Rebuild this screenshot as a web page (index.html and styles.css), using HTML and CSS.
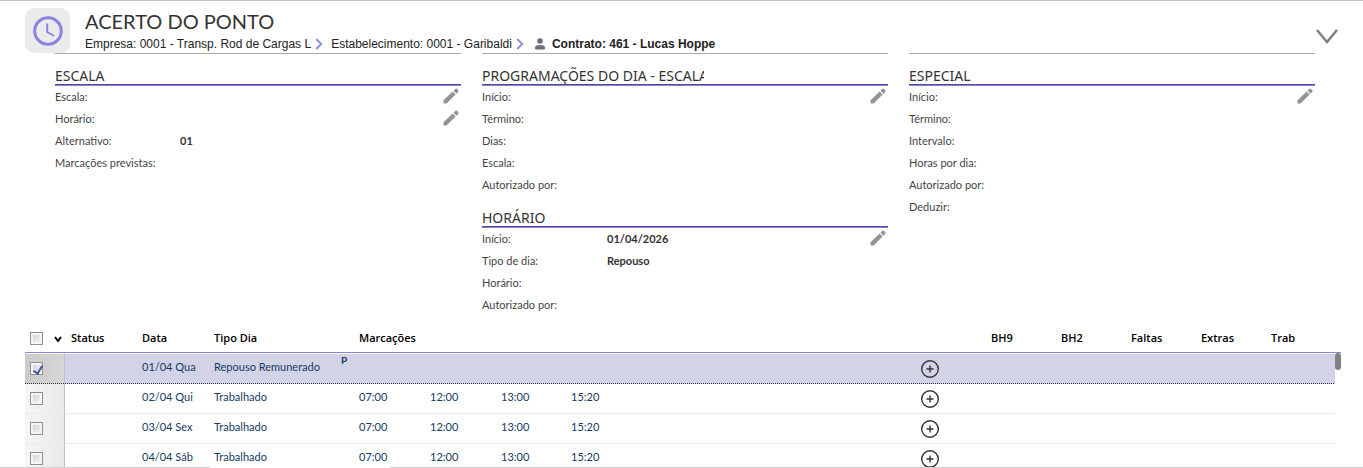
FILE: index.html
```html
<!DOCTYPE html>
<html lang="pt-BR">
<head>
<meta charset="UTF-8">
<title>Acerto do Ponto</title>
<link rel="stylesheet" href="styles.css">
</head>
<body>
<svg class="defs" aria-hidden="true">
  <symbol id="pencil" viewBox="0 0 16 16">
    <path d="M0.5 12.2L9.6 3.6l3 3L3.6 15.500H0.500z"/>
    <path d="M10.500 2.700l1.700-1.700q1-.8 1.900 0l1.200 1.200q.7 1-.1 1.900L13.500 5.700z"/>
  </symbol>
  <symbol id="plus" viewBox="0 0 18 18">
    <circle cx="9" cy="9" r="8.300"/>
    <path d="M9 5.500v7M5.500 9h7"/>
  </symbol>
  <symbol id="next" viewBox="0 0 8 12">
    <path d="M1.200 1l5 5-5 5"/>
  </symbol>
</svg>

<header class="top">
  <div class="logo">
    <svg width="30" height="30" viewBox="0 0 30 30"><circle cx="15" cy="15" r="13.300"/><path d="M14.200 7.500v8.500l7 4"/></svg>
  </div>
  <div class="heading">
    <h1>ACERTO DO PONTO</h1>
    <nav class="crumbs">
      <span>Empresa: 0001 - Transp. Rod de Cargas L</span>
      <svg class="next" width="8" height="12"><use href="#next"/></svg>
      <span>Estabelecimento: 0001 - Garibaldi</span>
      <svg class="next" width="8" height="12"><use href="#next"/></svg>
      <svg class="person" width="10" height="12" viewBox="0 0 10 12"><circle cx="5" cy="3" r="2.800"/><path d="M0 10.500V9.500Q0 7 5 7t5 2.500v1q0 1-1 1H1q-1 0-1-1z"/></svg>
      <strong>Contrato: 461 - Lucas Hoppe</strong>
    </nav>
  </div>
  <button type="button" class="collapse" aria-label="Recolher">
    <svg width="22" height="15" viewBox="0 0 22 15"><path d="M1 1l10 12L21 1"/></svg>
  </button>
</header>

<main class="details">
  <div class="column">
    <section>
      <h2>ESCALA</h2>
      <dl>
        <div><dt>Escala:</dt><dd></dd><button type="button" class="edit" aria-label="Editar escala"><svg width="16" height="16"><use href="#pencil"/></svg></button></div>
        <div><dt>Horário:</dt><dd></dd><button type="button" class="edit" aria-label="Editar horário"><svg width="16" height="16"><use href="#pencil"/></svg></button></div>
        <div><dt>Alternativo:</dt><dd>01</dd></div>
        <div><dt>Marcações previstas:</dt><dd></dd></div>
      </dl>
    </section>
  </div>
  <div class="column">
    <section>
      <h2><span>PROGRAMAÇÕES DO DIA - ESCALA</span></h2>
      <dl>
        <div><dt>Início:</dt><dd></dd><button type="button" class="edit" aria-label="Editar programações"><svg width="16" height="16"><use href="#pencil"/></svg></button></div>
        <div><dt>Término:</dt><dd></dd></div>
        <div><dt>Dias:</dt><dd></dd></div>
        <div><dt>Escala:</dt><dd></dd></div>
        <div><dt>Autorizado por:</dt><dd></dd></div>
      </dl>
    </section>
    <section>
      <h2>HORÁRIO</h2>
      <dl>
        <div><dt>Início:</dt><dd>01/04/2026</dd><button type="button" class="edit" aria-label="Editar horário do dia"><svg width="16" height="16"><use href="#pencil"/></svg></button></div>
        <div><dt>Tipo de dia:</dt><dd>Repouso</dd></div>
        <div><dt>Horário:</dt><dd></dd></div>
        <div><dt>Autorizado por:</dt><dd></dd></div>
      </dl>
    </section>
  </div>
  <div class="column">
    <section>
      <h2>ESPECIAL</h2>
      <dl>
        <div><dt>Início:</dt><dd></dd><button type="button" class="edit" aria-label="Editar especial"><svg width="16" height="16"><use href="#pencil"/></svg></button></div>
        <div><dt>Término:</dt><dd></dd></div>
        <div><dt>Intervalo:</dt><dd></dd></div>
        <div><dt>Horas por dia:</dt><dd></dd></div>
        <div><dt>Autorizado por:</dt><dd></dd></div>
        <div><dt>Deduzir:</dt><dd></dd></div>
      </dl>
    </section>
  </div>
</main>

<div class="grid">
  <table>
    <colgroup>
      <col class="c-sel"><col class="c-day"><col class="c-date"><col class="c-type"><col class="c-flag">
      <col class="c-day"><col class="c-day"><col class="c-sum"><col>
      <col class="c-sum"><col class="c-sum"><col class="c-sum"><col class="c-sum"><col class="c-sum"><col class="c-sum"><col class="c-bar">
    </colgroup>
    <thead>
      <tr>
        <th class="sel"><input type="checkbox" aria-label="Selecionar todos"><svg class="sort" width="8" height="6" viewBox="0 0 8 6"><path d="M1 1l3 4 3-4"/></svg></th>
        <th>Status</th>
        <th>Data</th>
        <th colspan="2">Tipo Dia</th>
        <th colspan="5">Marcações</th>
        <th>BH9</th>
        <th>BH2</th>
        <th>Faltas</th>
        <th>Extras</th>
        <th colspan="2">Trab</th>
      </tr>
    </thead>
    <tbody>
      <tr class="selected">
        <td class="sel"><input type="checkbox" aria-label="01/04 Qua" checked></td>
        <td></td><td>01/04 Qua</td><td>Repouso Remunerado</td><td class="flag">P</td>
        <td></td><td></td><td></td><td></td>
        <td><button type="button" class="add" aria-label="Incluir marcação"><svg width="18" height="18"><use href="#plus"/></svg></button></td>
        <td></td><td></td><td></td><td></td><td></td>
      </tr>
      <tr>
        <td class="sel"><input type="checkbox" aria-label="02/04 Qui"></td>
        <td></td><td>02/04 Qui</td><td>Trabalhado</td><td></td>
        <td>07:00</td><td>12:00</td><td>13:00</td><td>15:20</td>
        <td><button type="button" class="add" aria-label="Incluir marcação"><svg width="18" height="18"><use href="#plus"/></svg></button></td>
        <td></td><td></td><td></td><td></td><td></td>
      </tr>
      <tr>
        <td class="sel"><input type="checkbox" aria-label="03/04 Sex"></td>
        <td></td><td>03/04 Sex</td><td>Trabalhado</td><td></td>
        <td>07:00</td><td>12:00</td><td>13:00</td><td>15:20</td>
        <td><button type="button" class="add" aria-label="Incluir marcação"><svg width="18" height="18"><use href="#plus"/></svg></button></td>
        <td></td><td></td><td></td><td></td><td></td>
      </tr>
      <tr>
        <td class="sel"><input type="checkbox" aria-label="04/04 Sáb"></td>
        <td></td><td>04/04 Sáb</td><td>Trabalhado</td><td></td>
        <td>07:00</td><td>12:00</td><td>13:00</td><td>15:20</td>
        <td><button type="button" class="add" aria-label="Incluir marcação"><svg width="18" height="18"><use href="#plus"/></svg></button></td>
        <td></td><td></td><td></td><td></td><td></td>
      </tr>
    </tbody>
  </table>
  <span class="thumb"></span>
</div>
<footer class="bottom"><span></span><span></span></footer>
</body>
</html>
```
FILE: styles.css
```css
* {
  box-sizing: border-box;
}
body {
  display: flex;
  flex-direction: column;
  height: 100vh;
  margin: 0;
  overflow: hidden;
  border-top: 1px solid #c8c8c8;
  background: #fff;
  color: #333;
  font-family: Lato, "Open Sans", sans-serif;
  font-size: 11px;
}
h1, h2, dl, dd {
  margin: 0;
  font-weight: normal;
}
button {
  display: block;
  padding: 0;
  border: 0;
  background: none;
  cursor: pointer;
}
svg {
  display: block;
  flex: none;
}
.defs {
  position: absolute;
  width: 0;
  height: 0;
}

/* header */
.top {
  display: flex;
  flex: none;
  height: 52px;
  padding: 7px 25px 0;
}
.logo {
  display: flex;
  flex: none;
  align-items: center;
  justify-content: center;
  width: 45px;
  height: 45px;
  border-radius: 9px;
  background: #ebebeb;
}
.logo svg {
  fill: none;
  stroke: #8984e0;
  stroke-width: 3;
}
.logo path {
  stroke-width: 2;
}
.heading {
  flex: 1;
  margin-left: 15px;
}
h1 {
  font-size: 20px;
  line-height: 26px;
}
.crumbs {
  display: flex;
  align-items: center;
  height: 20px;
  font-family: "Liberation Sans", sans-serif;
  font-size: 12px;
  color: #222;
  white-space: nowrap;
}
.next {
  margin: 0 8px 0 4px;
  fill: none;
  stroke: #9590e6;
  stroke-width: 2;
}
.person {
  margin: 0 7px 0 3px;
  fill: #6a7078;
}
.collapse {
  align-self: flex-start;
  margin-top: 21px;
}
.collapse svg {
  fill: none;
  stroke: #808080;
  stroke-width: 2.5;
}

/* detail sections */
.details {
  display: grid;
  flex: none;
  grid-template-columns: repeat(3, 1fr);
  gap: 21px;
  padding: 0 48px 0 55px;
}
.column {
  border-top: 1px solid #aaa;
}
section {
  padding-top: 13px;
}
h2 {
  height: 18px;
  margin-bottom: 1px;
  border-bottom: 1px solid #4f4a96;
  box-shadow: 0 1px #8780d8;
  color: #333;
  font-family: "Noto Sans", sans-serif;
  font-size: 14px;
  line-height: 18px;
  white-space: nowrap;
}
h2 span {
  display: block;
  width: 222px;
  overflow: hidden;
}
dl {
  padding-right: 2px;
}
dl div {
  display: flex;
  align-items: center;
  height: 22px;
  padding-bottom: 2px;
}
dt {
  width: 125px;
  color: #444;
}
dd {
  flex: 1;
  font-weight: bold;
}
.edit svg {
  fill: #949494;
}

/* table of days */
.grid {
  position: relative;
  flex: 1;
  min-height: 0;
  margin: 7px 22px 0 25px;
  overflow: hidden;
}
table {
  width: 100%;
  border-collapse: separate;
  border-spacing: 0;
  table-layout: fixed;
}
.c-sel {
  width: 40px;
}
.c-day {
  width: 71px;
}
.c-date {
  width: 72px;
}
.c-type {
  width: 127px;
}
.c-flag {
  width: 18px;
}
.c-sum {
  width: 70px;
}
.c-bar {
  width: 6px;
}
th, td {
  padding: 0 0 0 6px;
  text-align: left;
  white-space: nowrap;
}
th {
  height: 30px;
  border-bottom: 1px solid #8984e0;
  color: #000;
  font-family: "Open Sans", sans-serif;
  font-weight: 600;
}
td {
  height: 30px;
  padding-bottom: 4px;
  border-bottom: 1px solid #ebebeb;
  color: #153a63;
}
.selected {
  background: repeating-linear-gradient(90deg, #333 0 1px, #d2d3e7 1px 2px);
}
.selected td {
  height: 31px;
  border-top: 1px solid #fff;
  border-bottom-color: transparent;
  background: #d2d3e7 padding-box;
}
th.sel, td.sel {
  padding-left: 5px;
}
td.sel {
  padding-bottom: 2px;
  border-right: 1px solid #c0c0c0;
  background: linear-gradient(90deg, #f6f6f6, #e8e8e8);
}
.selected td.sel {
  background: linear-gradient(90deg, #cacaca, #d6d6d6) padding-box;
}
.selected td.flag {
  font-size: 10px;
  font-weight: bold;
  line-height: 12px;
  vertical-align: top;
}
input {
  position: relative;
  display: inline-block;
  width: 13px;
  height: 13px;
  margin: 0;
  border: 1px solid #8e8f8f;
  appearance: none;
  background: linear-gradient(135deg, #c9ccd0, #fafafa);
  box-shadow: inset 0 0 0 2px #f4f4f4;
  vertical-align: middle;
}
input:checked::after {
  content: "";
  position: absolute;
  top: 1px;
  left: 4px;
  width: 4px;
  height: 8px;
  border: solid #4058a0;
  border-width: 0 2px 2px 0;
  transform: rotate(30deg);
}
.sort {
  display: inline-block;
  margin-left: 11px;
  fill: none;
  stroke: #000;
  stroke-width: 2;
  vertical-align: middle;
}
.add {
  margin-top: 4px;
}
.add svg {
  fill: none;
  stroke: #333;
  stroke-width: 1.400;
}
.thumb {
  position: absolute;
  top: 30px;
  right: 0;
  width: 6px;
  height: 17px;
  border-radius: 3px;
  background: #828282;
}
.bottom {
  display: flex;
  flex: none;
  gap: 180px;
  height: 1px;
}
.bottom span {
  width: 210px;
  background: #d0d0d0;
}
.bottom span + span {
  flex: 1;
}
```
